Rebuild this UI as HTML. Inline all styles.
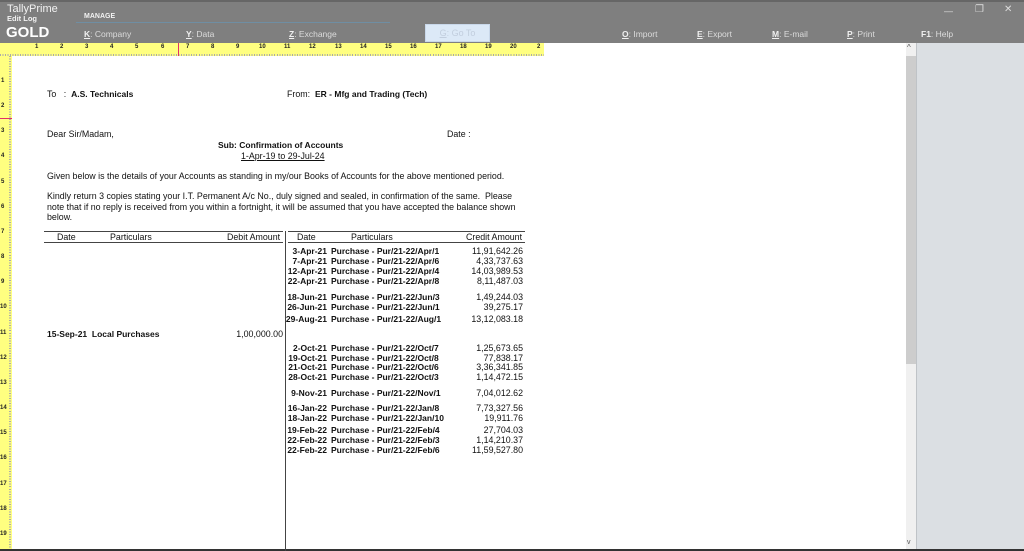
<!DOCTYPE html>
<html><head><meta charset="utf-8"><style>
*{margin:0;padding:0;box-sizing:border-box}
body{width:1024px;height:551px;overflow:hidden;background:#fff;font-family:"Liberation Sans",Arial,sans-serif;position:relative}
.a{position:absolute;white-space:nowrap}
#hdr{position:absolute;left:0;top:0;width:1024px;height:43px;background:#7f7f7f;border-top:2px solid #666}
.m{position:absolute;top:27px;font-size:8.5px;color:#dcdcdc}
.m b{font-weight:bold;text-decoration:underline;color:#f0f0f0}
#rt{position:absolute;left:0;top:43px;width:544px;height:13px;background:#ffff80;
background-image:repeating-linear-gradient(90deg,#aaa 0 1px,transparent 1px 2.516px);background-size:100% 2px;background-repeat:no-repeat;background-position:0 11px}
#rl{position:absolute;left:0;top:56px;width:12px;height:495px;background:#ffff80;
background-image:repeating-linear-gradient(180deg,#aaa 0 1px,transparent 1px 2.516px);background-size:2px 100%;background-repeat:no-repeat;background-position:9px 0}
.rn{position:absolute;font-size:6px;font-weight:bold;color:#222}
.t{position:absolute;font-size:8.85px;color:#111;white-space:nowrap}
.bd{font-weight:bold;font-size:8.5px}
.r{text-align:right}
</style></head><body>
<div id="hdr">
<div class="a" style="left:7px;top:1px;font-size:11px;color:#f2f2f2">TallyPrime</div>
<div class="a" style="left:7px;top:12px;font-size:7.5px;color:#f2f2f2;font-weight:bold">Edit Log</div>
<div class="a" style="left:6px;top:22px;font-size:15px;color:#fff;font-weight:bold">GOLD</div>
<div class="a" style="left:84px;top:11px;font-size:7px;color:#f2f2f2;font-weight:bold">MANAGE</div>
<div class="a" style="left:76px;top:20px;width:314px;height:1px;background:#6f8ea3"></div>
<div class="m" style="left:84px"><b>K</b>: Company</div>
<div class="m" style="left:186px"><b>Y</b>: Data</div>
<div class="m" style="left:289px"><b>Z</b>: Exchange</div>
<div class="a" style="left:425px;top:22px;width:65px;height:18px;background:#dce9f7;border:1px solid #c9d8ea;font-size:9px;color:#c2cede;text-align:center;line-height:16px"><u>G</u>: Go To</div>
<div class="m" style="left:622px"><b>O</b>: Import</div>
<div class="m" style="left:697px"><b>E</b>: Export</div>
<div class="m" style="left:772px"><b>M</b>: E-mail</div>
<div class="m" style="left:847px"><b>P</b>: Print</div>
<div class="m" style="left:921px"><span style="font-weight:bold;color:#f0f0f0">F1</span>: Help</div>
<div class="a" style="left:944px;top:4px;font-size:9px;color:#ddd">—</div>
<div class="a" style="left:975px;top:2px;font-size:10px;color:#ddd">❐</div>
<div class="a" style="left:1004px;top:2px;font-size:10px;color:#ddd">✕</div>
</div>
<div id="rt"></div>
<div id="rl"></div>
<div class="a" style="left:178px;top:43px;width:1px;height:13px;background:#e0306a"></div>
<div class="a" style="left:0;top:118px;width:12px;height:1px;background:#e0306a"></div>
<div class="rn" style="left:35px;top:44px">1</div><div class="rn" style="left:60px;top:44px">2</div><div class="rn" style="left:85px;top:44px">3</div><div class="rn" style="left:110px;top:44px">4</div><div class="rn" style="left:135px;top:44px">5</div><div class="rn" style="left:161px;top:44px">6</div><div class="rn" style="left:186px;top:44px">7</div><div class="rn" style="left:211px;top:44px">8</div><div class="rn" style="left:236px;top:44px">9</div><div class="rn" style="left:259px;top:44px">10</div><div class="rn" style="left:284px;top:44px">11</div><div class="rn" style="left:309px;top:44px">12</div><div class="rn" style="left:335px;top:44px">13</div><div class="rn" style="left:360px;top:44px">14</div><div class="rn" style="left:385px;top:44px">15</div><div class="rn" style="left:410px;top:44px">16</div><div class="rn" style="left:435px;top:44px">17</div><div class="rn" style="left:460px;top:44px">18</div><div class="rn" style="left:485px;top:44px">19</div><div class="rn" style="left:510px;top:44px">20</div><div class="rn" style="left:537px;top:44px">2</div>
<div class="rn" style="left:1px;top:78px">1</div><div class="rn" style="left:1px;top:103px">2</div><div class="rn" style="left:1px;top:128px">3</div><div class="rn" style="left:1px;top:153px">4</div><div class="rn" style="left:1px;top:179px">5</div><div class="rn" style="left:1px;top:204px">6</div><div class="rn" style="left:1px;top:229px">7</div><div class="rn" style="left:1px;top:254px">8</div><div class="rn" style="left:1px;top:279px">9</div><div class="rn" style="left:0;top:304px">10</div><div class="rn" style="left:0;top:330px">11</div><div class="rn" style="left:0;top:355px">12</div><div class="rn" style="left:0;top:380px">13</div><div class="rn" style="left:0;top:405px">14</div><div class="rn" style="left:0;top:430px">15</div><div class="rn" style="left:0;top:455px">16</div><div class="rn" style="left:0;top:481px">17</div><div class="rn" style="left:0;top:506px">18</div><div class="rn" style="left:0;top:531px">19</div>

<div class="a" style="left:906px;top:43px;width:10px;height:508px;background:#f0f0f0"></div>
<div class="a" style="left:906px;top:56px;width:10px;height:308px;background:#cdcdcd"></div>
<div class="a" style="left:907px;top:43px;font-size:8px;color:#555">^</div>
<div class="a" style="left:907px;top:539px;font-size:7px;color:#555">v</div>
<div class="a" style="left:916px;top:43px;width:1px;height:508px;background:#bfc3c7"></div>
<div class="a" style="left:917px;top:43px;width:107px;height:508px;background:#dbdfe3"></div>
<div class="a" style="left:0;top:549px;width:1024px;height:2px;background:#333"></div>

<div class="t" style="left:47px;top:89px">To &nbsp; : &nbsp;<span class="bd">A.S. Technicals</span></div>
<div class="t" style="left:287px;top:89px">From: &nbsp;<span class="bd">ER - Mfg and Trading (Tech)</span></div>
<div class="t" style="left:47px;top:129px">Dear Sir/Madam,</div>
<div class="t" style="left:447px;top:129px">Date :</div>
<div class="t bd" style="left:218px;top:140px">Sub: Confirmation of Accounts</div>
<div class="t" style="left:241px;top:151px;text-decoration:underline">1-Apr-19 to 29-Jul-24</div>
<div class="t" style="left:47px;top:171px">Given below is the details of your Accounts as standing in my/our Books of Accounts for the above mentioned period.</div>
<div class="t" style="left:47px;top:191px">Kindly return 3 copies stating your I.T. Permanent A/c No., duly signed and sealed, in confirmation of the same.&nbsp; Please</div>
<div class="t" style="left:47px;top:202px">note that if no reply is received from you within a fortnight, it will be assumed that you have accepted the balance shown</div>
<div class="t" style="left:47px;top:212px">below.</div>

<div class="a" style="left:44px;top:231px;width:239px;height:1px;background:#444"></div>
<div class="a" style="left:44px;top:242px;width:239px;height:1px;background:#444"></div>
<div class="a" style="left:288px;top:231px;width:237px;height:1px;background:#444"></div>
<div class="a" style="left:288px;top:242px;width:237px;height:1px;background:#444"></div>
<div class="a" style="left:285px;top:231px;width:1px;height:320px;background:#444"></div>
<div class="t" style="left:57px;top:232px">Date</div>
<div class="t" style="left:110px;top:232px">Particulars</div>
<div class="t" style="left:227px;top:232px">Debit Amount</div>
<div class="t" style="left:297px;top:232px">Date</div>
<div class="t" style="left:351px;top:232px">Particulars</div>
<div class="t" style="left:466px;top:232px">Credit Amount</div>

<div class="t bd" style="left:47px;top:329px">15-Sep-21 &nbsp;Local Purchases</div>
<div class="t r" style="left:200px;top:329px;width:83px">1,00,000.00</div>

<div class="t bd r" style="left:270px;top:246px;width:57px">3-Apr-21</div><div class="t bd" style="left:331px;top:246px">Purchase - Pur/21-22/Apr/1</div><div class="t r" style="left:440px;top:246px;width:83px">11,91,642.26</div>
<div class="t bd r" style="left:270px;top:256px;width:57px">7-Apr-21</div><div class="t bd" style="left:331px;top:256px">Purchase - Pur/21-22/Apr/6</div><div class="t r" style="left:440px;top:256px;width:83px">4,33,737.63</div>
<div class="t bd r" style="left:270px;top:266px;width:57px">12-Apr-21</div><div class="t bd" style="left:331px;top:266px">Purchase - Pur/21-22/Apr/4</div><div class="t r" style="left:440px;top:266px;width:83px">14,03,989.53</div>
<div class="t bd r" style="left:270px;top:276px;width:57px">22-Apr-21</div><div class="t bd" style="left:331px;top:276px">Purchase - Pur/21-22/Apr/8</div><div class="t r" style="left:440px;top:276px;width:83px">8,11,487.03</div>
<div class="t bd r" style="left:270px;top:292px;width:57px">18-Jun-21</div><div class="t bd" style="left:331px;top:292px">Purchase - Pur/21-22/Jun/3</div><div class="t r" style="left:440px;top:292px;width:83px">1,49,244.03</div>
<div class="t bd r" style="left:270px;top:302px;width:57px">26-Jun-21</div><div class="t bd" style="left:331px;top:302px">Purchase - Pur/21-22/Jun/1</div><div class="t r" style="left:440px;top:302px;width:83px">39,275.17</div>
<div class="t bd r" style="left:270px;top:314px;width:57px">29-Aug-21</div><div class="t bd" style="left:331px;top:314px">Purchase - Pur/21-22/Aug/1</div><div class="t r" style="left:440px;top:314px;width:83px">13,12,083.18</div>
<div class="t bd r" style="left:270px;top:343px;width:57px">2-Oct-21</div><div class="t bd" style="left:331px;top:343px">Purchase - Pur/21-22/Oct/7</div><div class="t r" style="left:440px;top:343px;width:83px">1,25,673.65</div>
<div class="t bd r" style="left:270px;top:353px;width:57px">19-Oct-21</div><div class="t bd" style="left:331px;top:353px">Purchase - Pur/21-22/Oct/8</div><div class="t r" style="left:440px;top:353px;width:83px">77,838.17</div>
<div class="t bd r" style="left:270px;top:362px;width:57px">21-Oct-21</div><div class="t bd" style="left:331px;top:362px">Purchase - Pur/21-22/Oct/6</div><div class="t r" style="left:440px;top:362px;width:83px">3,36,341.85</div>
<div class="t bd r" style="left:270px;top:372px;width:57px">28-Oct-21</div><div class="t bd" style="left:331px;top:372px">Purchase - Pur/21-22/Oct/3</div><div class="t r" style="left:440px;top:372px;width:83px">1,14,472.15</div>
<div class="t bd r" style="left:270px;top:388px;width:57px">9-Nov-21</div><div class="t bd" style="left:331px;top:388px">Purchase - Pur/21-22/Nov/1</div><div class="t r" style="left:440px;top:388px;width:83px">7,04,012.62</div>
<div class="t bd r" style="left:270px;top:403px;width:57px">16-Jan-22</div><div class="t bd" style="left:331px;top:403px">Purchase - Pur/21-22/Jan/8</div><div class="t r" style="left:440px;top:403px;width:83px">7,73,327.56</div>
<div class="t bd r" style="left:270px;top:413px;width:57px">18-Jan-22</div><div class="t bd" style="left:331px;top:413px">Purchase - Pur/21-22/Jan/10</div><div class="t r" style="left:440px;top:413px;width:83px">19,911.76</div>
<div class="t bd r" style="left:270px;top:425px;width:57px">19-Feb-22</div><div class="t bd" style="left:331px;top:425px">Purchase - Pur/21-22/Feb/4</div><div class="t r" style="left:440px;top:425px;width:83px">27,704.03</div>
<div class="t bd r" style="left:270px;top:435px;width:57px">22-Feb-22</div><div class="t bd" style="left:331px;top:435px">Purchase - Pur/21-22/Feb/3</div><div class="t r" style="left:440px;top:435px;width:83px">1,14,210.37</div>
<div class="t bd r" style="left:270px;top:445px;width:57px">22-Feb-22</div><div class="t bd" style="left:331px;top:445px">Purchase - Pur/21-22/Feb/6</div><div class="t r" style="left:440px;top:445px;width:83px">11,59,527.80</div>
</body></html>
